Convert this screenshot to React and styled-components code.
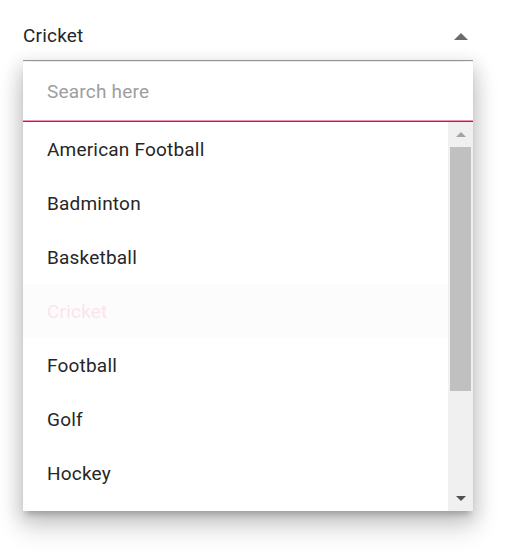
import React from 'react';
import styled, { createGlobalStyle } from 'styled-components';

const sports = ['American Football', 'Badminton', 'Basketball', 'Cricket', 'Football', 'Golf', 'Hockey'];
const selected = 'Cricket';

const GlobalStyle = createGlobalStyle`
  body {
    margin: 0;
    background: #fff;
    font-family: Roboto, 'Liberation Sans', sans-serif;
  }
`;

const Page = styled.div`
  width: 508px;
  min-height: 558px;
  padding: 0 35px 0 23px;
  box-sizing: border-box;
`;

const Field = styled.div`
  display: flex;
  align-items: flex-start;
  justify-content: space-between;
  height: 37px;
  padding-top: 23px;
  line-height: 26px;
  border-bottom: 1px solid #9e9e9e;
  color: #262626;
  font-size: 19px;
  letter-spacing: 0.2px;
`;

const Caret = styled.span`
  width: 0;
  height: 0;
  margin: 10px 5px 0 0;
  border-left: 7px solid transparent;
  border-right: 7px solid transparent;
  border-bottom: 7px solid #6b6b6b;
`;

const Popup = styled.div`
  margin-top: 1px;
  background: #fff;
  box-shadow: 0 14px 24px 2px rgba(0, 0, 0, 0.18), 0 4px 16px 4px rgba(0, 0, 0, 0.1),
    0 6px 6px -3px rgba(0, 0, 0, 0.2);
`;

const Search = styled.div`
  height: 59px;
  display: flex;
  align-items: center;
  padding: 0 24px;
  border-bottom: 1px solid #c2185b;
  box-shadow: inset 0 -1px 0 #f48fb1;
  color: #9e9e9e;
  font-size: 19px;
  letter-spacing: 0.2px;
`;

const Body = styled.div`
  display: flex;
  height: 389px;
`;

const List = styled.ul`
  flex: 1;
  margin: 0;
  padding: 0;
  list-style: none;
  overflow: hidden;
`;

const Item = styled.li`
  height: 54px;
  display: flex;
  align-items: center;
  padding: 0 24px;
  font-size: 19px;
  letter-spacing: 0.2px;
  color: ${(p) => (p.$active ? '#fce4ec' : '#262626')};
  background: ${(p) => (p.$active ? '#fcfcfc' : '#fff')};
`;

const Scrollbar = styled.div`
  width: 25px;
  background: #f0f0f0;
  display: flex;
  flex-direction: column;
  align-items: center;
`;

const Arrow = styled.div`
  height: 25px;
  display: flex;
  align-items: center;
  justify-content: center;
  &::after {
    content: '';
    border-left: 5px solid transparent;
    border-right: 5px solid transparent;
    ${(p) => (p.$down ? 'border-top: 5px solid #505050;' : 'border-bottom: 5px solid #a3a3a3;')}
  }
`;

const Thumb = styled.div`
  width: 21px;
  height: 244px;
  background: #c0c0c0;
`;

const Spacer = styled.div`
  flex: 1;
`;

export default function App() {
  return (
    <Page>
      <GlobalStyle />
      <Field>
        <span>{selected}</span>
        <Caret />
      </Field>
      <Popup>
        <Search>Search here</Search>
        <Body>
          <List>
            {sports.map((s) => (
              <Item key={s} $active={s === selected}>
                {s}
              </Item>
            ))}
          </List>
          <Scrollbar>
            <Arrow />
            <Thumb />
            <Spacer />
            <Arrow $down />
          </Scrollbar>
        </Body>
      </Popup>
    </Page>
  );
}
